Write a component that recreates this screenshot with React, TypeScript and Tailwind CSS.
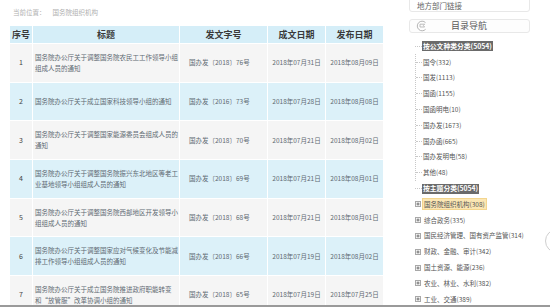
import React from "react";

type Row = { n: number; title: string[]; doc: string; d1: string; d2: string };

const rows: Row[] = [
  { n: 1, title: ["国务院办公厅关于调整国务院农民工工作领导小组", "组成人员的通知"], doc: "国办发〔2018〕76号", d1: "2018年07月31日", d2: "2018年08月09日" },
  { n: 2, title: ["国务院办公厅关于成立国家科技领导小组的通知"], doc: "国办发〔2016〕73号", d1: "2018年07月28日", d2: "2018年08月08日" },
  { n: 3, title: ["国务院办公厅关于调整国家能源委员会组成人员的", "通知"], doc: "国办发〔2018〕70号", d1: "2018年07月21日", d2: "2018年08月02日" },
  { n: 4, title: ["国务院办公厅关于调整国务院振兴东北地区等老工", "业基地领导小组组成人员的通知"], doc: "国办发〔2018〕69号", d1: "2018年07月21日", d2: "2018年08月01日" },
  { n: 5, title: ["国务院办公厅关于调整国务院西部地区开发领导小", "组组成人员的通知"], doc: "国办发〔2018〕68号", d1: "2018年07月21日", d2: "2018年08月01日" },
  { n: 6, title: ["国务院办公厅关于调整国家应对气候变化及节能减", "排工作领导小组组成人员的通知"], doc: "国办发〔2018〕66号", d1: "2018年07月19日", d2: "2018年08月02日" },
  { n: 7, title: ["国务院办公厅关于成立国务院推进政府职能转变", "和“放管服”改革协调小组的通知"], doc: "国办发〔2018〕65号", d1: "2018年07月19日", d2: "2018年07月25日" },
];

const group1 = ["国令(332)", "国发(1113)", "国函(1155)", "国函明电(10)", "国办发(1673)", "国办函(665)", "国办发明电(58)", "其他(48)"];
const group2 = ["综合政务(335)", "国民经济管理、国有资产监管(314)", "财政、金融、审计(342)", "国土资源、能源(236)", "农业、林业、水利(382)", "工业、交通(389)"];

function PlusBox() {
  return (
    <svg width="6" height="6" viewBox="0 0 6 6" className="shrink-0">
      <rect x="0.5" y="0.5" width="5" height="5" fill="#f3f3f3" stroke="#a8a8a8" strokeWidth="1" />
      <path d="M1.5 3H4.5M3 1.5V4.5" stroke="#666" strokeWidth="0.9" />
    </svg>
  );
}

function NavIcon() {
  return (
    <svg width="12" height="12" viewBox="0 0 12 12" className="shrink-0">
      <path d="M9.5 2.6A4.8 4.8 0 1 0 9.6 9.3" fill="none" stroke="#b5b5b5" strokeWidth="1" />
      <path d="M4 4.2L8.6 4.2L7.4 5.6L8.6 7L4 7Z" fill="none" stroke="#b5b5b5" strokeWidth="0.9" strokeLinejoin="round" />
    </svg>
  );
}

export default function App() {
  return (
    <div className="relative w-[550px] h-[307px] overflow-hidden bg-white flex font-['Noto_Sans_CJK_SC',sans-serif]">
      {/* Left: breadcrumb + table */}
      <div className="w-[409px] shrink-0 pl-[10px]">
        <div className="h-[26px] pt-[7px] pl-[3px] text-[6.5px] leading-[10px] text-[#b0b0b0] whitespace-nowrap">
          当前位置：<span className="ml-[7px]">国务院组织机构</span>
        </div>
        <div className="w-[373px] flex flex-col gap-y-px">
          <div className="h-[17px] grid grid-cols-[22px_146px_87px_57px_57px] gap-x-px text-[9px] font-bold text-[#3a3a3a]">
            <div className="bg-[#d5eef8] flex items-center justify-center">序号</div>
            <div className="bg-[#d5eef8] flex items-center justify-center">标题</div>
            <div className="bg-[#d5eef8] flex items-center justify-center">发文字号</div>
            <div className="bg-[#d5eef8] flex items-center justify-center">成文日期</div>
            <div className="bg-[#d5eef8] flex items-center justify-center">发布日期</div>
          </div>
          {rows.map((r) => {
            const bg = r.n % 2 === 0 ? "bg-[#dcf1f9]" : "bg-[#f5f5f5]";
            return (
              <div key={r.n} className="h-[37.7px] grid grid-cols-[22px_146px_87px_57px_57px] gap-x-px text-[6.5px] leading-[11px] text-[#5f6a73] shrink-0">
                <div className={`${bg} flex items-center justify-center text-[7px] text-[#444]`}>{r.n}</div>
                <div className={`${bg} flex flex-col justify-center pl-[2px] whitespace-nowrap`}>
                  {r.title.map((t, i) => (
                    <span key={i}>{t}</span>
                  ))}
                </div>
                <div className={`${bg} flex items-center pl-[9px] whitespace-nowrap`}>{r.doc}</div>
                <div className={`${bg} flex items-center justify-center whitespace-nowrap`}>{r.d1}</div>
                <div className={`${bg} flex items-center justify-center whitespace-nowrap`}>{r.d2}</div>
              </div>
            );
          })}
        </div>
      </div>

      {/* Right: nav */}
      <div className="w-[121px] shrink-0 flex flex-col">
        <div className="-mt-[8px] h-[21px] border border-[#e8e8e8] rounded-[3px] pt-[8px] pl-[7px] text-[7.5px] leading-[10px] text-[#666] whitespace-nowrap">
          地方部门链接
        </div>
        <div className="mt-[7px] h-[15px] border border-[#e8e8e8] rounded-[3px] flex items-center pl-[6px] bg-[#fdfdfd]">
          <NavIcon />
          <span className="ml-[23px] text-[9px] leading-[12px] text-[#5a5a5a]">目录导航</span>
        </div>

        <div className="mt-[5px] pl-[6px] text-[6.5px] leading-[9px] text-[#555] whitespace-nowrap">
          <div className="h-[15.8px] flex items-center">
            <span className="w-[7px] border-t border-dotted border-[#c8c8c8]" />
            <span className="bg-[#6a6a6a] text-white font-bold px-[1px] py-[0.5px] text-[6.8px]">按公文种类分类(5054)</span>
          </div>
          <div className="border-l border-dotted border-[#c8c8c8]">
            {group1.map((g) => (
              <div key={g} className="h-[15.8px] flex items-center">
                <span className="w-[6px] border-t border-dotted border-[#c8c8c8]" />
                <span className="pl-[1px]">{g}</span>
              </div>
            ))}
          </div>
          <div className="h-[15.8px] flex items-center">
            <span className="w-[7px] border-t border-dotted border-[#c8c8c8]" />
            <span className="bg-[#6a6a6a] text-white font-bold px-[1px] py-[0.5px] text-[6.8px]">按主题分类(5054)</span>
          </div>
          <div className="h-[15.8px] flex items-center">
            <PlusBox />
            <span className="ml-[1px] bg-[#fbe6b3] border border-[#f3d58e] px-[1px] py-[0.5px]">国务院组织机构(308)</span>
          </div>
          {group2.map((g) => (
            <div key={g} className="h-[15.8px] flex items-center">
              <PlusBox />
              <span className="ml-[2px] pl-[1px]">{g}</span>
            </div>
          ))}
        </div>
      </div>

      {/* floating round button at right edge */}
      <div className="absolute left-[545px] top-[229px] w-[24px] h-[24px] rounded-full border border-[#cfcfcf] bg-white" />
      {/* bottom window edge */}
      <div className="absolute left-0 right-0 bottom-0 h-[2px] bg-[#9a9a9a]" />
    </div>
  );
}
